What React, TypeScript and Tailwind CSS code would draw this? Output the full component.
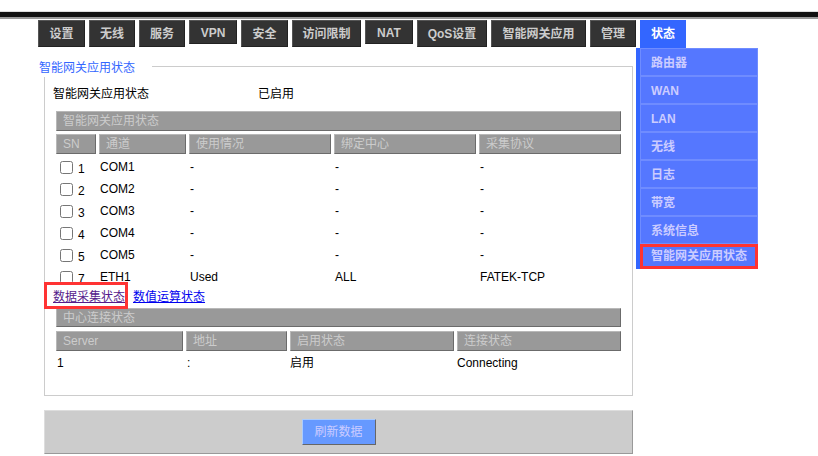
import React from "react";

const tabs = [
  { label: "设置", w: "w-[47px]", h: "h-[27px]" },
  { label: "无线", w: "w-[46px]", h: "h-[27px]" },
  { label: "服务", w: "w-[46px]", h: "h-[27px]" },
  { label: "VPN", w: "w-[48px]", h: "h-[24px]" },
  { label: "安全", w: "w-[47px]", h: "h-[27px]" },
  { label: "访问限制", w: "w-[69px]", h: "h-[27px]" },
  { label: "NAT", w: "w-[48px]", h: "h-[24px]" },
  { label: "QoS设置", w: "w-[70px]", h: "h-[27px]" },
  { label: "智能网关应用", w: "w-[95px]", h: "h-[27px]" },
  { label: "管理", w: "w-[46px]", h: "h-[27px]" },
];

const menu = ["路由器", "WAN", "LAN", "无线", "日志", "带宽", "系统信息"];

const channels = [
  { sn: "1", ch: "COM1", use: "-", center: "-", proto: "-" },
  { sn: "2", ch: "COM2", use: "-", center: "-", proto: "-" },
  { sn: "3", ch: "COM3", use: "-", center: "-", proto: "-" },
  { sn: "4", ch: "COM4", use: "-", center: "-", proto: "-" },
  { sn: "5", ch: "COM5", use: "-", center: "-", proto: "-" },
  { sn: "7", ch: "ETH1", use: "Used", center: "ALL", proto: "FATEK-TCP" },
];

const headCell =
  "h-[20px] bg-[#999999] border-t border-l border-[#b8b8b8] border-b border-r border-b-[#6b6b6b] border-r-[#6b6b6b] pl-[6px] leading-[19px] text-[#cccccc] whitespace-nowrap";

const grid1 = "grid grid-cols-[40px_87px_142px_142px_142px] gap-x-[3px]";
const grid2 = "grid grid-cols-[127px_101px_164px_164px] gap-x-[3px]";

function Bar({ title, h }: { title: string; h: string }) {
  return (
    <div
      className={`ml-[11px] w-[565px] ${h} bg-[#999999] border-t border-l border-[#b8b8b8] border-b border-r border-b-[#6b6b6b] border-r-[#6b6b6b] pl-[6px] leading-[19px] text-[#cccccc]`}
    >
      {title}
    </div>
  );
}

export default function App() {
  return (
    <div
      className="w-[818px] h-[456px] overflow-hidden bg-white text-[12px] text-black"
      style={{ fontFamily: '"Liberation Sans", "Noto Sans CJK SC", sans-serif' }}
    >
      <div className="h-[11px]" />
      <div className="h-[1px] bg-[#dddddd]" />
      <div className="h-[5px] bg-[#111111]" />
      <div className="h-[2px] bg-[#999999]" />

      {/* top nav */}
      <div className="mt-[1px] flex h-[28px] items-start gap-[4px] pl-[38px]">
        {tabs.map((t) => (
          <div
            key={t.label}
            className={`${t.w} ${t.h} flex items-center justify-center border border-[#555555] border-b-[#222222] border-r-[#222222] bg-[#333333] pt-[1px] font-bold text-[#cccccc]`}
          >
            {t.label}
          </div>
        ))}
        <div className="flex h-[28px] w-[46px] items-center justify-center bg-[#3366ff] font-bold text-white">
          状态
        </div>
      </div>

      <div className="flex">
        <div className="ml-[44px] flex w-[589px] flex-col">
          {/* fieldset */}
          <div className="relative mt-[18px] flex h-[330px] flex-col border border-[#cccccc]">
            <span className="absolute -left-[8px] -top-[8px] h-[18px] bg-white pl-[2px] pr-[17px] leading-[18px] text-[#3366ff]">
              智能网关应用状态
            </span>

            <div className="mt-[19px] flex h-[16px] pl-[8px] leading-[16px]">
              <span className="w-[205px]">智能网关应用状态</span>
              <span>已启用</span>
            </div>

            <div className="mt-[9px]">
              <Bar title="智能网关应用状态" h="h-[20px]" />
            </div>

            <div className={`ml-[11px] mt-[3px] w-[565px] ${grid1}`}>
              <div className={headCell}>SN</div>
              <div className={headCell}>通道</div>
              <div className={headCell}>使用情况</div>
              <div className={headCell}>绑定中心</div>
              <div className={headCell}>采集协议</div>
            </div>

            <div className="ml-[11px] mt-[2px] w-[565px]">
              {channels.map((r) => (
                <div key={r.ch} className={`${grid1} h-[22px] items-center`}>
                  <div className="flex items-center pl-[4px]">
                    <input type="checkbox" className="m-0 h-[13px] w-[13px]" />
                    <span className="ml-[5px] mt-[3px]">{r.sn}</span>
                  </div>
                  <div className="pl-[1px]">{r.ch}</div>
                  <div className="pl-[1px]">{r.use}</div>
                  <div className="pl-[1px]">{r.center}</div>
                  <div className="pl-[1px]">{r.proto}</div>
                </div>
              ))}
            </div>

            <div className="mt-[1px] flex h-[16px] gap-[8px] pl-[8px] leading-[16px]">
              <a href="#" className="relative text-[#551a8b] underline">
                数据采集状态
                <span className="pointer-events-none absolute -bottom-[4px] -left-[9px] -right-[3px] -top-[7px] border-[3px] border-[#ff3333]" />
              </a>
              <a href="#" className="text-[#0000ee] underline">
                数值运算状态
              </a>
            </div>

            <div className="mt-[3px]">
              <Bar title="中心连接状态" h="h-[19px]" />
            </div>

            <div className={`ml-[11px] mt-[4px] w-[565px] ${grid2}`}>
              <div className={headCell}>Server</div>
              <div className={headCell}>地址</div>
              <div className={headCell}>启用状态</div>
              <div className={headCell}>连接状态</div>
            </div>

            <div className={`ml-[11px] mt-[1px] h-[22px] w-[565px] items-center ${grid2}`}>
              <div className="pl-[1px]">1</div>
              <div className="pl-[1px]">:</div>
              <div>启用</div>
              <div>Connecting</div>
            </div>
          </div>

          {/* bottom actions */}
          <div className="mt-[14px] flex h-[44px] items-start justify-center border border-[#dddddd] border-b-[#999999] border-r-[#999999] bg-[#cccccc] pt-[8px]">
            <button className="h-[26px] w-[74px] border border-[#aaccff] border-b-[#666666] border-r-[#666666] bg-[#6699ff] text-[12px] text-[#ccccff]">
              刷新数据
            </button>
          </div>
        </div>

        {/* status dropdown */}
        <div className="ml-[3px] flex w-[122px] flex-col self-start bg-[#3366ff] pl-[4px]">
          {menu.map((m) => (
            <div
              key={m}
              className="h-[28px] border border-[#6f8cff] bg-[#5577ff] pl-[10px] pt-[1px] font-bold leading-[26px] text-[#ccccff]"
            >
              {m}
            </div>
          ))}
          <div className="h-[25px] border-[3px] border-[#ff3333] bg-[#5577ff] pl-[8px] font-bold leading-[19px] text-[#ccccff]">
            智能网关应用状态
          </div>
        </div>
      </div>
    </div>
  );
}
